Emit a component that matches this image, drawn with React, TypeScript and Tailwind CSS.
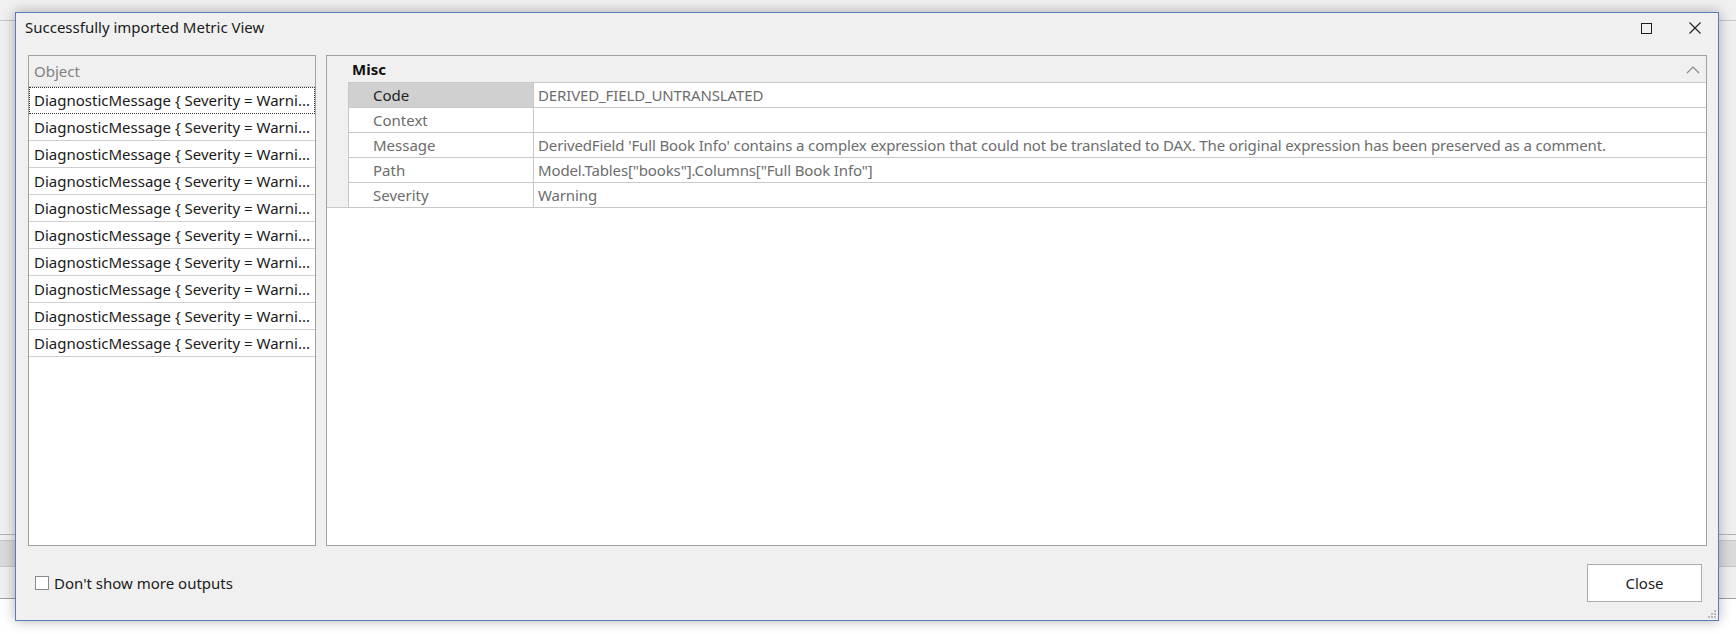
import React from 'react';

const font = { fontFamily: '"Segoe UI", "Noto Sans", sans-serif' };

const ROWS = Array.from({ length: 10 }, (_, i) => i);

const PROPS = [
  { name: 'Code', value: 'DERIVED_FIELD_UNTRANSLATED', selected: true },
  { name: 'Context', value: '' },
  {
    name: 'Message',
    value:
      "DerivedField 'Full Book Info' contains a complex expression that could not be translated to DAX. The original expression has been preserved as a comment.",
  },
  { name: 'Path', value: 'Model.Tables["books"].Columns["Full Book Info"]' },
  { name: 'Severity', value: 'Warning' },
];

const ObjectList: React.FC = () => (
  <div className="w-[288px] shrink-0 border border-[#a0a0a0] bg-white flex flex-col">
    <div className="h-[31px] shrink-0 bg-[#f0f0f0] border-b border-[#d6d6d6] pl-[5px] flex items-center text-[15px] text-[#808080]">
      Object
    </div>
    {ROWS.map((i) => (
      <div
        key={i}
        className={
          i === 0
            ? 'h-[27px] shrink-0 border border-dotted border-[#333] pl-[4px] flex items-center text-[15px] text-[#1a1a1a] whitespace-nowrap overflow-hidden'
            : 'h-[27px] shrink-0 border-b border-[#cfcfcf] pl-[5px] flex items-center text-[15px] text-[#1a1a1a] whitespace-nowrap overflow-hidden'
        }
      >
        DiagnosticMessage {'{'} Severity = Warni...
      </div>
    ))}
  </div>
);

const PropertyGrid: React.FC = () => (
  <div className="flex-1 border border-[#a0a0a0] bg-white flex flex-col">
    <div className="h-[26px] shrink-0 bg-[#f0f0f0] flex items-center justify-between pl-[25px] pr-[6px]">
      <span className="text-[15px] font-bold text-[#111]">Misc</span>
      <svg width="14" height="8" viewBox="0 0 14 8" className="mt-[1px]">
        <path d="M1 7 L7 1 L13 7" fill="none" stroke="#8a8a8a" strokeWidth="1.2" />
      </svg>
    </div>
    <div className="flex border-b border-[#c8c8c8]">
      <div className="w-[21px] shrink-0 bg-[#f0f0f0]" />
      <div className="flex-1 flex flex-col border-l border-t border-[#c8c8c8]">
        {PROPS.map((p, i) => (
          <div
            key={p.name}
            className={
              i === PROPS.length - 1
                ? 'h-[24px] flex text-[15px]'
                : 'h-[25px] flex text-[15px] border-b border-[#c8c8c8]'
            }
          >
            <div
              className={
                p.selected
                  ? 'w-[185px] shrink-0 border-r border-[#c8c8c8] bg-[#d0d0d0] text-[#1e1e1e] pl-[24px] flex items-center'
                  : 'w-[185px] shrink-0 border-r border-[#c8c8c8] text-[#6d6d6d] pl-[24px] flex items-center'
              }
            >
              {p.name}
            </div>
            <div className="flex-1 pl-[4px] flex items-center text-[#6d6d6d] whitespace-nowrap tracking-[-0.13px]">
              {p.value}
            </div>
          </div>
        ))}
      </div>
    </div>
    <div className="flex-1" />
  </div>
);

const App: React.FC = () => {
  return (
    <div className="relative w-[1736px] h-[634px] overflow-hidden bg-white" style={font}>
      {/* window behind the dialog */}
      <div className="flex flex-col">
        <div className="h-[21px] bg-[#f0f0f0] border-b border-[#c8c8c8]" />
        <div className="h-[513px] bg-[#f0f0f0]" />
        <div className="h-[6px] bg-[#f0f0f0] border-t border-[#b4b4b4]" />
        <div className="h-[27px] bg-[#dadada] border-t border-[#c8c8c8] border-b border-[#9a9a9a]" />
        <div className="h-[32px] bg-[#f0f0f0] border-b border-[#a0a0a0]" />
      </div>

      {/* dialog window */}
      <div className="absolute left-[15px] top-[12px] w-[1704px] h-[609px] border border-[#5b7cb6] bg-[#f0f0f0] shadow-[0_0_12px_rgba(0,0,0,0.3)] flex flex-col">
        <div className="h-[42px] shrink-0 flex items-start justify-between pl-[9px] pt-[4px]">
          <span className="text-[15px] text-[#1a1a1a] leading-[20px]">Successfully imported Metric View</span>
          <div className="flex items-center gap-[37px] pr-[17px] pt-[5px]">
            <svg width="11" height="11" viewBox="0 0 11 11">
              <rect x="0.5" y="0.5" width="10" height="10" fill="none" stroke="#1e1e1e" strokeWidth="1" />
            </svg>
            <svg width="12" height="12" viewBox="0 0 12 12">
              <path d="M0.5 0.5 L11.5 11.5 M11.5 0.5 L0.5 11.5" stroke="#1e1e1e" strokeWidth="1.1" />
            </svg>
          </div>
        </div>

        <div className="h-[491px] shrink-0 flex gap-[10px] pl-[12px] pr-[11px]">
          <ObjectList />
          <PropertyGrid />
        </div>

        <div className="flex-1 relative flex items-start justify-between pl-[19px] pr-[16px]">
          <label className="flex items-center gap-[5px] mt-[26px] text-[15px] text-[#1a1a1a]">
            <span className="w-[14px] h-[14px] border border-[#8a8a8a] bg-white" />
            Don't show more outputs
          </label>
          <button className="mt-[18px] w-[115px] h-[38px] border border-[#adadad] bg-white text-[15px] text-[#1a1a1a]">
            Close
          </button>
          <svg width="10" height="10" viewBox="0 0 10 10" className="absolute right-[1px] bottom-[1px]">
            <rect x="7" y="1" width="2" height="2" fill="#b8b8b8" />
            <rect x="4" y="4" width="2" height="2" fill="#b8b8b8" />
            <rect x="7" y="4" width="2" height="2" fill="#b8b8b8" />
            <rect x="1" y="7" width="2" height="2" fill="#b8b8b8" />
            <rect x="4" y="7" width="2" height="2" fill="#b8b8b8" />
            <rect x="7" y="7" width="2" height="2" fill="#b8b8b8" />
          </svg>
        </div>
      </div>
    </div>
  );
};

export default App;
